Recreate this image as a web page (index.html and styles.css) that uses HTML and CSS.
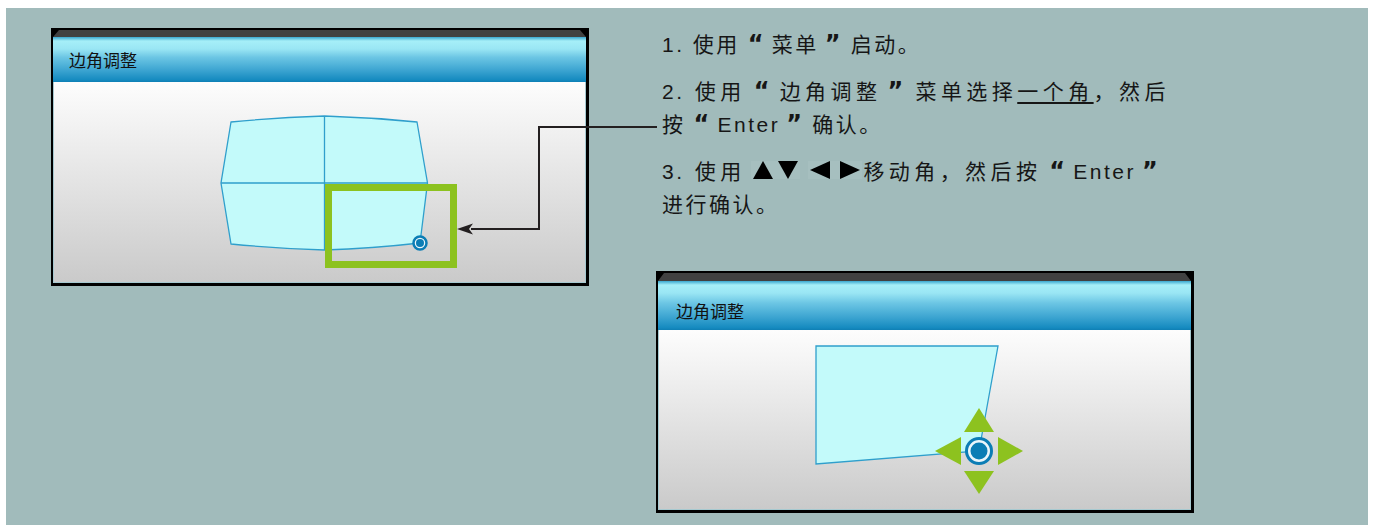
FILE: index.html
```html
<!DOCTYPE html>
<html lang="zh-CN">
  <head>
    <meta charset="UTF-8" />
    <meta name="viewport" content="width=device-width, initial-scale=1.0" />
    <title>边角调整</title>
    <link rel="stylesheet" href="styles.css">
  </head>
  <body>
    <div class="panel">
      <div class="col-left">
        <div class="osd">
          <div class="osd-cap"></div>
          <div class="osd-title">边角调整</div>
          <div class="osd-body">
            <svg width="531" height="200">
              <path class="screen" d="M177,40 Q223,35.5 270.5,34 Q317,35.5 363,40 L373.5,101 L366,161 Q318,166.5 270.5,168 Q223,166.5 177,162 L167,101 Z" />
              <path class="screen-line" d="M270.5,34 V168 M167,101 H373.5" />
              <rect class="pick" x="274.5" y="105.5" width="125" height="77" />
              <circle class="knob-ring" cx="366" cy="161" r="6.5" />
              <circle class="knob" cx="366" cy="161" r="4" />
            </svg>
          </div>
        </div>
      </div>

      <div class="col-right">
        <div class="steps">
          <p>1. 使用<span class="lq">“</span>菜单<span class="rq">”</span>启动。</p>
          <p>2. 使用<span class="lq">“</span>边角调整<span class="rq">”</span>菜单选择<span class="ul">一个角</span>，然后<span class="nw">按<span class="lq">“</span>Enter<span class="rq">”</span>确认。</span></p>
          <p>3. 使用<span class="keys"><span class="tri up"></span><span class="tri down"></span></span><span class="keys keys-lr"><span class="tri left"></span><span class="tri right"></span></span>移动角，然后按<span class="lq">“</span>Enter<span class="rq">”</span><span class="nw">进行确认。</span></p>
        </div>

        <div class="osd osd-b">
          <div class="osd-cap"></div>
          <div class="osd-title">边角调整</div>
          <div class="osd-body">
            <svg width="531" height="179">
              <polygon class="screen" points="157,16 339,16 320,121 157,134" />
              <polygon class="arrow" points="320,78 335,102 305,102" />
              <polygon class="arrow" points="305,141 335,141 320,164" />
              <polygon class="arrow" points="276,121 302,107 302,135" />
              <polygon class="arrow" points="339,107 364,121 339,135" />
              <circle class="knob-ring thick" cx="320" cy="121" r="12.5" />
              <circle class="knob" cx="320" cy="121" r="8.5" />
            </svg>
          </div>
        </div>
      </div>

      <!-- callout line from step 2 to the picked corner -->
      <svg class="pointer">
        <path d="M651,119 H533 V221 H465" />
        <polygon points="451,221 467,215.5 463,221 467,226.5" />
      </svg>
    </div>
  </body>
</html>
```

FILE: styles.css
```css
body {
  margin: 0;
  background: #fff;
  font-family: "Liberation Sans", "Noto Sans CJK SC", sans-serif;
}

.panel {
  position: relative;
  box-sizing: border-box;
  height: 517px;
  margin: 8px 7px 0 6px;
  padding: 20px 0 0 45px;
  background: #a1bbbb;
  display: grid;
  grid-template-columns: 538px 538px;
  column-gap: 67px;
  align-items: start;
}

/* on-screen menu window */
.osd {
  background: #000;
  border-style: solid;
  border-color: #000;
  border-width: 2px 3px 3px 2px;
}

.osd-cap {
  height: 7px;
  background: #414141;
  clip-path: polygon(6px 0, calc(100% - 6px) 0, 100% 100%, 0 100%);
}

.osd-title {
  box-sizing: border-box;
  height: 45px;
  display: flex;
  align-items: center;
  padding-left: 16px;
  font: 17px "Noto Sans CJK SC", sans-serif;
  color: #111;
  background: linear-gradient(to bottom, #3aa7cf 0, #a6eff8 4px, #9ae6f4 12px, #6cc6e4 45%, #3aa3d0 75%, #168bc0 95%, #0e7fb5 100%);
}

.osd-body {
  height: 200px;
  border: 1px solid #a6c9d0;
  border-top: 0;
  background: linear-gradient(to bottom, #fdfdfd, #cacaca);
}

.osd-body svg {
  display: block;
}

.osd-b {
  margin-top: 50px;
}

.osd-b .osd-cap {
  height: 8px;
}

.osd-b .osd-title {
  height: 49px;
  padding-top: 9px;
  padding-left: 18px;
}

.osd-b .osd-body {
  height: 179px;
}

/* drawings */
.screen {
  fill: #c3fafa;
  stroke: #2f9fcc;
  stroke-width: 1.3;
}

.screen-line {
  fill: none;
  stroke: #2f9fcc;
  stroke-width: 1.3;
}

.pick {
  fill: none;
  stroke: #8cc21f;
  stroke-width: 7;
}

.arrow {
  fill: #8dc21f;
}

.knob-ring {
  fill: #eaf6fb;
  stroke: #0b7db5;
  stroke-width: 2.5;
}

.knob-ring.thick {
  stroke-width: 3;
}

.knob {
  fill: #0b7db5;
}

/* steps text */
.steps {
  width: 506px;
  padding-left: 6px;
  color: #161616;
  font-size: 21px;
  line-height: 33px;
  letter-spacing: 2.5px;
}

.steps p {
  margin: 0 0 14px;
  text-align: justify;
}

.steps p:last-child {
  margin-bottom: 0;
}

/* wide, heavy quotes, as in the printed manual */
.lq,
.rq {
  display: inline-block;
  box-sizing: border-box;
  width: 32px;
  text-align: left;
  font: bold 24px/20px "DejaVu Sans", sans-serif;
  letter-spacing: 0;
}

.lq {
  padding-left: 8px;
}

.rq {
  padding-left: 6px;
}

.ul {
  text-decoration: underline;
  text-decoration-thickness: 1.5px;
  text-underline-offset: 3px;
}

.nw {
  white-space: nowrap;
}

.keys {
  display: inline-block;
  margin-left: 5px;
  padding: 0 2px;
  font-size: 0;
  line-height: 0;
  background: #a6bfbf;
}

.keys-lr {
  margin-left: 8px;
}

.tri {
  display: inline-block;
  width: 0;
  height: 0;
  border-style: solid;
  border-color: transparent;
}

.tri.up {
  border-width: 0 10px 18px;
  border-bottom-color: #000;
}

.tri.down {
  margin-left: 5px;
  border-width: 18px 10px 0;
  border-top-color: #000;
}

.tri.left {
  border-width: 9px 20px 9px 0;
  border-right-color: #000;
}

.tri.right {
  margin-left: 10px;
  border-width: 9px 0 9px 20px;
  border-left-color: #000;
}

.pointer {
  position: absolute;
  left: 0;
  top: 0;
  width: 100%;
  height: 100%;
  pointer-events: none;
}

.pointer path {
  fill: none;
  stroke: #231f20;
  stroke-width: 2;
}

.pointer polygon {
  fill: #231f20;
}
```
